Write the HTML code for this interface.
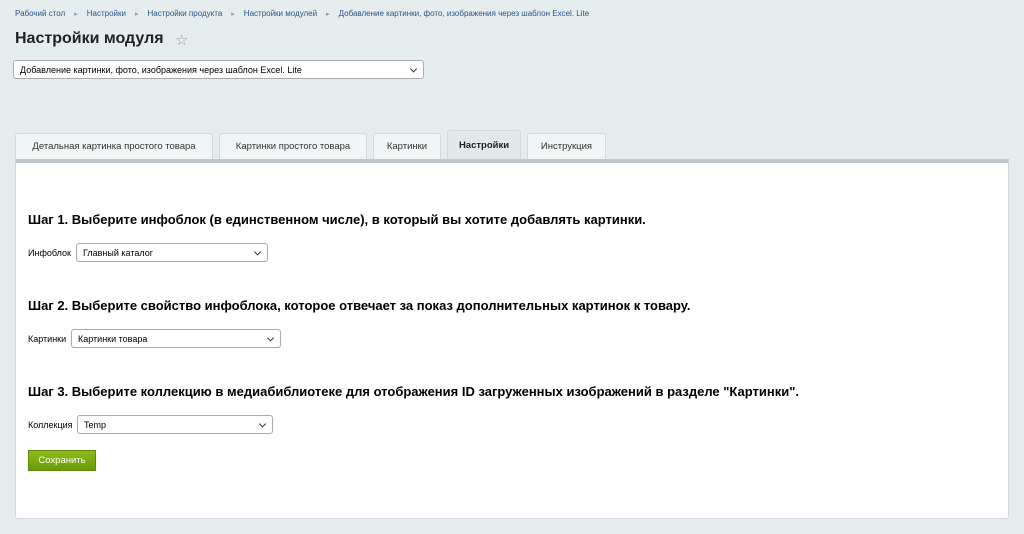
<!DOCTYPE html>
<html><head><meta charset="utf-8"><style>
*{box-sizing:border-box;margin:0;padding:0}
body{width:1024px;height:534px;background:#e6edef;font-family:"Liberation Sans",Arial,sans-serif;position:relative;overflow:hidden;color:#000}
.bc{position:absolute;left:15px;top:9px;font-size:8px;color:#2a5585;white-space:nowrap}
.bc span.s{color:#8a9aa5;margin:0 9px;font-size:7px}
h1{position:absolute;left:15px;top:30px;font-size:16px;font-weight:bold;color:#222;white-space:nowrap}
.star{position:absolute;left:175px;top:31px;font-size:15px;color:#999}
.sel{position:absolute;background:#fff;border:1px solid #a9a9a9;border-radius:3px;font-size:9px;padding-left:6px;display:flex;align-items:center;white-space:nowrap}
.sel:after{content:"";position:absolute;right:7px;top:50%;width:4px;height:4px;border-right:1.5px solid #333;border-bottom:1.5px solid #333;transform:translateY(-70%) rotate(45deg)}
.tab{position:absolute;top:133px;height:26px;background:#f2f5f6;border:1px solid #d3dadd;border-bottom:none;border-radius:3px 3px 0 0;font-size:9.5px;color:#333;display:flex;align-items:center;justify-content:center}
.tab.a{background:#e2e9eb;top:130px;height:29px;font-weight:bold;color:#222}
.panel{position:absolute;left:15px;top:159px;width:994px;height:360px;background:#fff;border:1px solid #d2d9dc;border-top:4px solid #bfc9cc;border-radius:0 0 3px 3px}
h2{position:absolute;left:28px;font-size:13px;font-weight:bold;white-space:nowrap}
.lbl{position:absolute;left:28px;font-size:9px}
.btn{position:absolute;left:28px;top:450px;width:68px;height:21px;background:linear-gradient(#8ebc1a,#6a9a0a);border:1px solid #5f8a08;color:#fff;font-size:9.5px;display:flex;align-items:center;justify-content:center}
</style></head><body>
<div class="bc">Рабочий стол<span class="s">▸</span>Настройки<span class="s">▸</span>Настройки продукта<span class="s">▸</span>Настройки модулей<span class="s">▸</span>Добавление картинки, фото, изображения через шаблон Excel. Lite</div>
<h1>Настройки модуля</h1><div class="star">☆</div>
<div class="sel" style="left:13px;top:60px;width:411px;height:19px">Добавление картинки, фото, изображения через шаблон Excel. Lite</div>
<div class="panel"></div>
<div class="tab" style="left:15px;width:198px">Детальная картинка простого товара</div>
<div class="tab" style="left:219px;width:148px">Картинки простого товара</div>
<div class="tab" style="left:373px;width:68px">Картинки</div>
<div class="tab a" style="left:447px;width:74px">Настройки</div>
<div class="tab" style="left:527px;width:79px">Инструкция</div>
<h2 style="top:212px">Шаг 1. Выберите инфоблок (в единственном числе), в который вы хотите добавлять картинки.</h2>
<div class="lbl" style="top:248px">Инфоблок</div>
<div class="sel" style="left:76px;top:243px;width:192px;height:19px">Главный каталог</div>
<h2 style="top:298px">Шаг 2. Выберите свойство инфоблока, которое отвечает за показ дополнительных картинок к товару.</h2>
<div class="lbl" style="top:334px">Картинки</div>
<div class="sel" style="left:71px;top:329px;width:210px;height:19px">Картинки товара</div>
<h2 style="top:384px">Шаг 3. Выберите коллекцию в медиабиблиотеке для отображения ID загруженных изображений в разделе "Картинки".</h2>
<div class="lbl" style="top:420px">Коллекция</div>
<div class="sel" style="left:77px;top:415px;width:196px;height:19px">Temp</div>
<div class="btn">Сохранить</div>
</body></html>
